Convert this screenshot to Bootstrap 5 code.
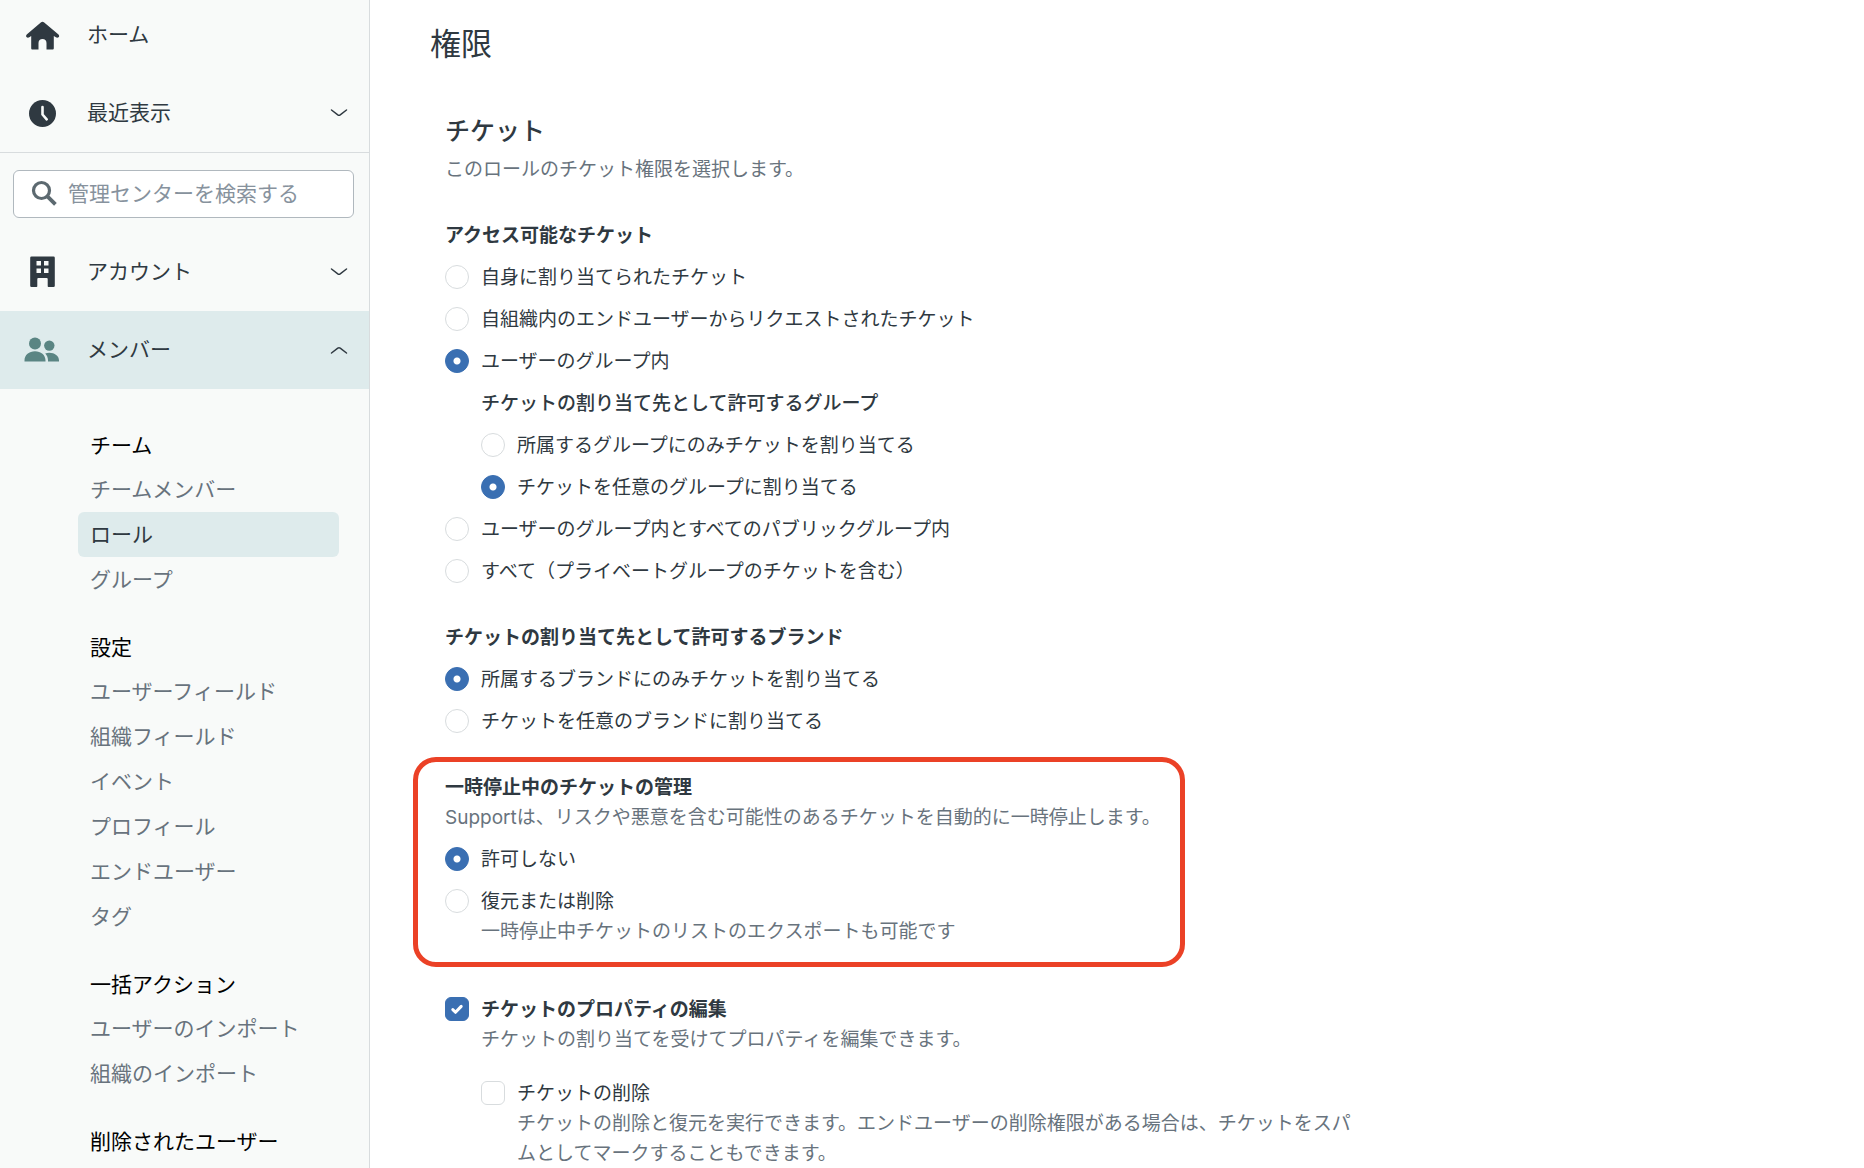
<!DOCTYPE html>
<html lang="ja">
<head>
<meta charset="utf-8">
<meta name="viewport" content="width=device-width, initial-scale=1">
<title>権限</title>
<link href="https://cdn.jsdelivr.net/npm/bootstrap@5.3.0/dist/css/bootstrap.min.css" rel="stylesheet">
<style>
  :root { --ink: #2f3941; --muted: #68737d; --line: #d8dcde; --tint: #deebec; --accent: #3a6fb2; }
  body { font-family: Inter, "Noto Sans CJK JP", sans-serif; font-size: 19px; line-height: 30px; color: var(--ink); background: #fff; }

  /* Sidebar */
  .side-nav { width: 370px; background: #f8faf9; border-right: 1px solid var(--line); font-size: 21px; }
  .nav-row { height: 78px; padding: 0 17px 0 20px; color: var(--ink); background: none; border: 0; text-align: left; text-decoration: none; }
  .nav-row.active-row { background: var(--tint); }
  .nav-row .row-icon { width: 44px; height: 40px; margin-right: 23px; }
  .side-top { border-bottom: 1px solid var(--line); margin-top: -4px; }
  .search-wrap { padding: 17px 15px 15px 13px; }
  .search-box { height: 48px; background: #fff; border: 1px solid #b0b8be; border-radius: 6px; padding: 0 16px; gap: 10px; }
  .search-box input { font-size: 21px; line-height: 30px; border: 0; padding: 0; background: none; color: var(--ink); box-shadow: none; outline: 0; }
  .search-box input::placeholder { color: #87929d; opacity: 1; }
  .sub-menu { padding: 11px 30px 4px 78px; }
  .sub-menu h2 { font-size: 21px; line-height: 43px; font-weight: 400; color: #000; margin: 24px 0 0; padding-left: 12px; }
  .sub-menu a { display: block; line-height: 45px; padding-left: 12px; color: var(--muted); text-decoration: none; border-radius: 6px; }
  .sub-menu a.current { background: var(--tint); color: var(--ink); }

  /* Permission form */
  .page-main { padding: 24px 24px 0 60px; }
  .page-main h1 { font-size: 31px; line-height: 40px; font-weight: 400; margin: 0 0 49px; }
  .perm-form { padding-left: 15px; max-width: 930px; }
  .perm-form h2 { font-size: 25px; line-height: 36px; font-weight: 500; margin: 0 0 6px; }
  .perm-form legend { float: none; font-size: 19px; line-height: 30px; font-weight: 700; margin: 0; }
  .hint { color: var(--muted); margin: 0; }
  .group { margin-top: 36px; }
  .opt { display: flex; gap: 12px; margin-top: 12px; }
  .opt .form-check-input { flex: none; width: 24px; height: 24px; margin: 2px 0 0; float: none; border: 1px solid var(--line); }
  .opt .form-check-input[type=checkbox] { border-radius: 6px; }
  .opt .form-check-input:checked { background-color: var(--accent); border-color: var(--accent); }
  .opt .form-check-input[type=radio]:checked { background-image: radial-gradient(circle, #fff 3px, transparent 4px); background-size: 100% 100%; }
  .opt .form-check-input[type=checkbox]:checked { background-size: 14px 14px; background-image: url("data:image/svg+xml,%3Csvg xmlns='http://www.w3.org/2000/svg' viewBox='0 0 14 14'%3E%3Cpath d='M2.8 7.6l2.7 2.7L11.2 4.4' fill='none' stroke='%23fff' stroke-width='3' stroke-linecap='round' stroke-linejoin='round'/%3E%3C/svg%3E"); }
  .nested { padding-left: 36px; margin-top: 12px; }
  .perm-form .nested legend { font-weight: 500; }
  .suspended { max-width: 740px; }
  .callout { inset: -16px 0 -20px -32px; border: 5px solid #eb4126; border-radius: 23px; pointer-events: none; }
  .prop-opt { margin-top: 48px; }
  .sub-opt { margin-top: 24px; padding-left: 36px; }
</style>
<script src="https://cdn.jsdelivr.net/npm/bootstrap@5.3.0/dist/js/bootstrap.bundle.min.js"></script>
</head>
<body>
<div class="d-flex min-vh-100">
  <nav class="side-nav flex-shrink-0" aria-label="管理センター">
    <div class="side-top">
      <a href="#" class="nav-row d-flex align-items-center w-100">
        <svg class="row-icon" viewBox="0 0 44 40" fill="#2f3941"><path transform="translate(0 1)" d="M20.8 6.6a2.6 2.6 0 0 1 3.4 0l14 11.6c1.1.9 1.200 2 .6 2.800-.7.800-1.900.9-2.900.3L33.800 20v12.200c0 .8-.500 1.300-1.300 1.300H26.500V27c0-2.500-1.600-4-4-4s-4 1.500-4 4v6.500H12.500c-.8 0-1.300-.5-1.300-1.300V20l-1.900 1.300c-1 .6-2.200.5-2.800-.3-.700-.8-.500-1.900.500-2.800z"/></svg>
        <span>ホーム</span>
      </a>
      <button type="button" class="nav-row d-flex align-items-center w-100">
        <svg class="row-icon" viewBox="0 0 44 40"><circle cx="22.500" cy="20.500" r="13.500" fill="#2f3941"/><path d="M22.500 14v7.500l4.200 4.800" fill="none" stroke="#f8faf9" stroke-width="2.600" stroke-linecap="round" stroke-linejoin="round"/></svg>
        <span class="flex-grow-1">最近表示</span>
        <svg width="26" height="16" viewBox="0 0 26 16" fill="none" stroke="#2f3941" stroke-width="1.500" stroke-linecap="round" stroke-linejoin="round"><path d="M5.500 5l6.300 4.800q1.200.8 2.400 0L20.500 5"/></svg>
      </button>
    </div>
    <div class="search-wrap">
      <div class="search-box d-flex align-items-center">
        <svg width="28" height="28" viewBox="0 0 28 28" fill="none" stroke="#5c6970" stroke-width="3.200" class="flex-shrink-0"><circle cx="11.500" cy="10.500" r="8"/><path d="M17.400 16.400l8 8" stroke-width="3.800"/></svg>
        <input type="search" class="w-100" aria-label="管理センターを検索する" placeholder="管理センターを検索する">
      </div>
    </div>
    <button type="button" class="nav-row d-flex align-items-center w-100" aria-expanded="false">
      <svg class="row-icon" viewBox="0 0 44 40"><path fill="#2f3941" fill-rule="evenodd" d="M11.500 4.500h22q1.300 0 1.300 1.300v27.900q0 1.300-1.300 1.300H28.500q-.8 0-.8-.8V27q0-1-1-1h-8.400q-1 0-1 1v7.200q0 .8-.8.8H11.500q-1.300 0-1.300-1.300V5.800q0-1.300 1.300-1.300zM16.500 9v4.500h4.500V9zm7.500 0v4.500h4.500V9zm-7.500 7.500V21h4.500v-4.500zm7.500 0V21h4.500v-4.500z"/></svg>
      <span class="flex-grow-1">アカウント</span>
      <svg width="26" height="16" viewBox="0 0 26 16" fill="none" stroke="#2f3941" stroke-width="1.500" stroke-linecap="round" stroke-linejoin="round"><path d="M5.500 5l6.300 4.800q1.200.8 2.400 0L20.500 5"/></svg>
    </button>
    <button type="button" class="nav-row active-row d-flex align-items-center w-100" aria-expanded="true">
      <svg class="row-icon" viewBox="0 0 44 40" fill="#5a8583"><circle cx="15" cy="13.500" r="6"/><circle cx="29.300" cy="15.600" r="5.200"/><path d="M4.500 31.500v-1C4.500 25 9.200 21.300 15 21.300S25.500 25 25.500 30.500v1zM25.200 23.500c1.300-.5 2.600-.7 4-.7 5.500 0 9.800 3.200 9.800 7.700v1H28v-1.200c0-2.600-1-5-2.800-6.800z"/></svg>
      <span class="flex-grow-1">メンバー</span>
      <svg width="26" height="16" viewBox="0 0 26 16" fill="none" stroke="#2f3941" stroke-width="1.500" stroke-linecap="round" stroke-linejoin="round"><path d="M5.500 11l6.300-4.800q1.200-.8 2.400 0L20.500 11"/></svg>
    </button>
    <div class="sub-menu">
      <h2>チーム</h2>
      <a href="#">チームメンバー</a>
      <a href="#" class="current" aria-current="page">ロール</a>
      <a href="#">グループ</a>
      <h2>設定</h2>
      <a href="#">ユーザーフィールド</a>
      <a href="#">組織フィールド</a>
      <a href="#">イベント</a>
      <a href="#">プロフィール</a>
      <a href="#">エンドユーザー</a>
      <a href="#">タグ</a>
      <h2>一括アクション</h2>
      <a href="#">ユーザーのインポート</a>
      <a href="#">組織のインポート</a>
      <h2>削除されたユーザー</h2>
    </div>
  </nav>

  <main class="page-main flex-grow-1">
    <h1>権限</h1>
    <form class="perm-form">
      <h2>チケット</h2>
      <p class="hint">このロールのチケット権限を選択します。</p>

      <fieldset class="group">
        <legend>アクセス可能なチケット</legend>
        <div class="opt"><input class="form-check-input" type="radio" name="access" id="a1"><label for="a1">自身に割り当てられたチケット</label></div>
        <div class="opt"><input class="form-check-input" type="radio" name="access" id="a2"><label for="a2">自組織内のエンドユーザーからリクエストされたチケット</label></div>
        <div class="opt"><input class="form-check-input" type="radio" name="access" id="a3" checked><label for="a3">ユーザーのグループ内</label></div>
        <fieldset class="nested">
          <legend>チケットの割り当て先として許可するグループ</legend>
          <div class="opt"><input class="form-check-input" type="radio" name="assign" id="g1"><label for="g1">所属するグループにのみチケットを割り当てる</label></div>
          <div class="opt"><input class="form-check-input" type="radio" name="assign" id="g2" checked><label for="g2">チケットを任意のグループに割り当てる</label></div>
        </fieldset>
        <div class="opt"><input class="form-check-input" type="radio" name="access" id="a4"><label for="a4">ユーザーのグループ内とすべてのパブリックグループ内</label></div>
        <div class="opt"><input class="form-check-input" type="radio" name="access" id="a5"><label for="a5">すべて（プライベートグループのチケットを含む）</label></div>
      </fieldset>

      <fieldset class="group">
        <legend>チケットの割り当て先として許可するブランド</legend>
        <div class="opt"><input class="form-check-input" type="radio" name="brand" id="b1" checked><label for="b1">所属するブランドにのみチケットを割り当てる</label></div>
        <div class="opt"><input class="form-check-input" type="radio" name="brand" id="b2"><label for="b2">チケットを任意のブランドに割り当てる</label></div>
      </fieldset>

      <div class="group suspended position-relative">
        <fieldset>
          <legend>一時停止中のチケットの管理</legend>
          <p class="hint">Supportは、リスクや悪意を含む可能性のあるチケットを自動的に一時停止します。</p>
          <div class="opt"><input class="form-check-input" type="radio" name="suspended" id="s1" checked><label for="s1">許可しない</label></div>
          <div class="opt"><input class="form-check-input" type="radio" name="suspended" id="s2" aria-describedby="s2h"><div><label for="s2">復元または削除</label><p class="hint" id="s2h">一時停止中チケットのリストのエクスポートも可能です</p></div></div>
        </fieldset>
        <div class="callout position-absolute"></div>
      </div>

      <div class="opt prop-opt"><input class="form-check-input" type="checkbox" id="p1" checked aria-describedby="p1h"><div><label for="p1" class="fw-bold">チケットのプロパティの編集</label><p class="hint" id="p1h">チケットの割り当てを受けてプロパティを編集できます。</p></div></div>
      <div class="opt sub-opt"><input class="form-check-input" type="checkbox" id="p2" aria-describedby="p2h"><div><label for="p2">チケットの削除</label><p class="hint" id="p2h">チケットの削除と復元を実行できます。エンドユーザーの削除権限がある場合は、チケットをスパムとしてマークすることもできます。</p></div></div>
    </form>
  </main>
</div>
</body>
</html>
